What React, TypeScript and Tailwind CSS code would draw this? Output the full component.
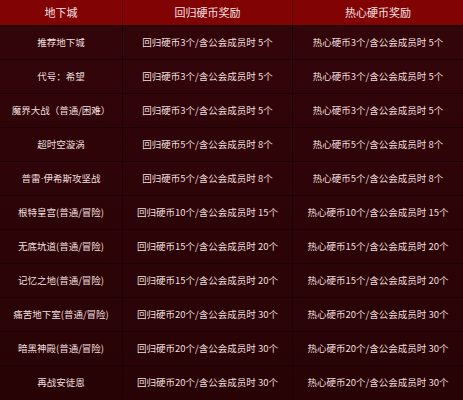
import React from "react";

const rows: [React.ReactNode, string, string][] = [
  ["推荐地下城", "回归硬币3个/含公会成员时 5个", "热心硬币3个/含公会成员时 5个"],
  ["代号：希望", "回归硬币3个/含公会成员时 5个", "热心硬币3个/含公会成员时 5个"],
  ["魔界大战（普通/困难）", "回归硬币3个/含公会成员时 5个", "热心硬币3个/含公会成员时 5个"],
  ["超时空漩涡", "回归硬币5个/含公会成员时 8个", "热心硬币5个/含公会成员时 8个"],
  [
    <>
      普雷<span style={{ fontFamily: '"Liberation Sans", sans-serif' }}>·</span>伊希斯攻坚战
    </>,
    "回归硬币5个/含公会成员时 8个",
    "热心硬币5个/含公会成员时 8个",
  ],
  ["根特皇宫(普通/冒险)", "回归硬币10个/含公会成员时 15个", "热心硬币10个/含公会成员时 15个"],
  ["无底坑道(普通/冒险)", "回归硬币15个/含公会成员时 20个", "热心硬币15个/含公会成员时 20个"],
  ["记忆之地(普通/冒险)", "回归硬币15个/含公会成员时 20个", "热心硬币15个/含公会成员时 20个"],
  ["痛苦地下室(普通/冒险)", "回归硬币20个/含公会成员时 30个", "热心硬币20个/含公会成员时 30个"],
  ["暗黑神殿(普通/冒险)", "回归硬币20个/含公会成员时 30个", "热心硬币20个/含公会成员时 30个"],
  ["再战安徒恩", "回归硬币20个/含公会成员时 30个", "热心硬币20个/含公会成员时 30个"],
];

export default function App() {
  return (
    <div
      className="w-[463px] h-[400px] overflow-hidden bg-gradient-to-b from-[#33050a] to-[#270306] text-[#f0dfdf]"
      style={{ fontFamily: '"Noto Sans CJK SC", "Noto Sans", sans-serif' }}
    >
      <div className="grid grid-cols-[123px_170px_170px] h-[25px] bg-[#810304] text-[11px] text-[#f3e2e2]">
        <div className="flex items-center justify-center border-r border-[#5a0203]">地下城</div>
        <div className="flex items-center justify-center border-r border-[#5a0203]">回归硬币奖励</div>
        <div className="flex items-center justify-center">热心硬币奖励</div>
      </div>
      {rows.map((r, i) => (
        <div
          key={i}
          className="grid grid-cols-[123px_170px_170px] h-[34px] border-t border-[#1c0204] text-[9.5px]"
        >
          <div className="flex items-center justify-center border-r border-[#1c0204] whitespace-nowrap">{r[0]}</div>
          <div className="flex items-center justify-center border-r border-[#1c0204] whitespace-nowrap">{r[1]}</div>
          <div className="flex items-center justify-center whitespace-nowrap">{r[2]}</div>
        </div>
      ))}
    </div>
  );
}
